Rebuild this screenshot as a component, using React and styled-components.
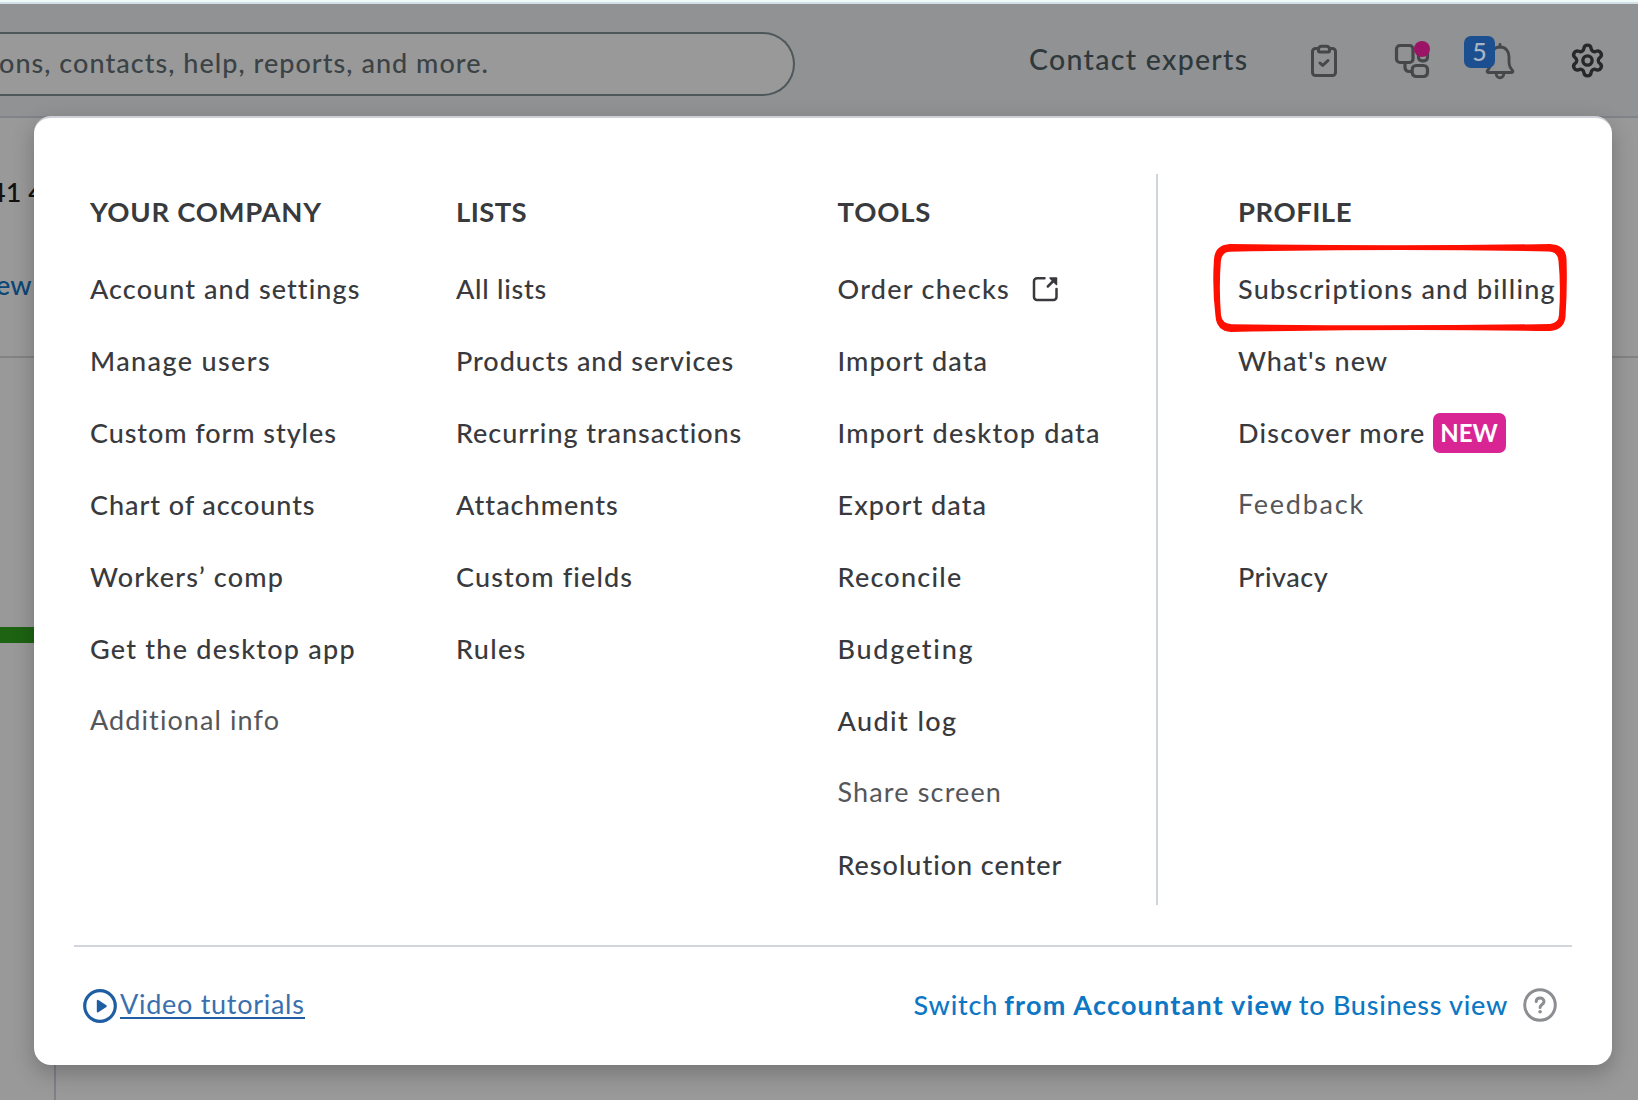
import React from 'react';
import styled, { createGlobalStyle } from 'styled-components';
import { Settings } from 'lucide-react';

const companyItems = [
    { title: 'Account and settings', spacing: 1.08 },
    { title: 'Manage users', spacing: 1.38 },
    { title: 'Custom form styles', spacing: 0.92 },
    { title: 'Chart of accounts', spacing: 0.93 },
    { title: 'Workers’ comp', spacing: 1.2 },
    { title: 'Get the desktop app', spacing: 1.24 },
    { title: 'Additional info', spacing: 1.1, light: true },
];

const listItems = [
    { title: 'All lists', spacing: 0.75 },
    { title: 'Products and services', spacing: 0.95 },
    { title: 'Recurring transactions', spacing: 0.94 },
    { title: 'Attachments', spacing: 1 },
    { title: 'Custom fields', spacing: 1.13 },
    { title: 'Rules', spacing: 1.3 },
];

const toolItems = [
    { title: 'Order checks', spacing: 1.27, external: true },
    { title: 'Import data', spacing: 1.1 },
    { title: 'Import desktop data', spacing: 1.18 },
    { title: 'Export data', spacing: 1.05 },
    { title: 'Reconcile', spacing: 1.25 },
    { title: 'Budgeting', spacing: 1.75 },
    { title: 'Audit log', spacing: 1.4 },
    { title: 'Share screen', spacing: 1.15, light: true },
    { title: 'Resolution center', spacing: 0.97 },
];

const profileItems = [
    { title: 'Subscriptions and billing', spacing: 1.23, marked: true },
    { title: "What's new", spacing: 0.95 },
    { title: 'Discover more', spacing: 1.22, isNew: true },
    { title: 'Feedback', spacing: 1.75, light: true },
    { title: 'Privacy', spacing: 0.5 },
];

function ClipboardIcon() {
    return (
        <svg width="36" height="36" viewBox="0 0 36 36" fill="none" stroke="#45474a" strokeWidth="3" strokeLinecap="round" strokeLinejoin="round">
            <path d="M12 5.500H9.500a3 3 0 0 0-3 3V29.500a3 3 0 0 0 3 3h17a3 3 0 0 0 3-3V8.500a3 3 0 0 0-3-3H24" />
            <path d="M12.500 7.800v-1.500a3 3 0 0 1 3-3h5a3 3 0 0 1 3 3v1.500a1.200 1.200 0 0 1-1.200 1.200h-8.600a1.200 1.200 0 0 1-1.200-1.200z" />
            <path d="M14 20l2.700 2.500 5.300-5" />
        </svg>
    );
}

function AppsIcon() {
    return (
        <svg width="44" height="44" viewBox="0 0 44 44" fill="none" stroke="#45474a" strokeWidth="3.2" strokeLinecap="round">
            <rect x="6.500" y="6.500" width="16.500" height="17" rx="3.500" />
            <rect x="28.500" y="10" width="9" height="11.800" rx="3.500" />
            <rect x="22.200" y="26.500" width="15.300" height="11" rx="4" />
            <path d="M15 24v4.500a4 4 0 0 0 4 4h2.500" />
            <circle cx="32" cy="10" r="8" fill="#9c1465" stroke="none" />
        </svg>
    );
}

function BellIcon() {
    return (
        <svg width="30" height="38" viewBox="0 0 30 38" fill="none" stroke="#45474a" strokeWidth="2.8" strokeLinecap="round" strokeLinejoin="round">
            <path d="M15 2.500v2.500" />
            <path d="M15 5c-5.500 0-9 4-9 9.500v5c0 4.500-1.500 7-3.500 9-.8.900-.4 2 .8 2h23.400c1.200 0 1.600-1.100.800-2-2-2-3.500-4.500-3.500-9v-5c0-5.500-3.500-9.500-9-9.500z" />
            <path d="M11.200 31.500a3.800 4.300 0 0 0 7.600 0" />
        </svg>
    );
}

function ExternalIcon() {
    return (
        <svg width="26" height="26" viewBox="0 0 26 26" fill="none" stroke="#393a3d" strokeWidth="2.5" strokeLinecap="round" strokeLinejoin="round">
            <path d="M12.500 2.300H5a3 3 0 0 0-3 3V21a3 3 0 0 0 3 3h16.500a3 3 0 0 0 3-3v-8" />
            <path d="M15.800 10.500l6-6" />
            <path d="M18 2h6.500v6.500z" fill="#393a3d" strokeWidth="1.500" />
        </svg>
    );
}

function PlayIcon() {
    return (
        <svg width="34" height="34" viewBox="0 0 34 34">
            <circle cx="17" cy="17" r="15.300" fill="none" stroke="#205ea3" strokeWidth="3.200" />
            <path d="M14.800 11.800v10.600l8-5.300z" fill="#205ea3" stroke="#205ea3" strokeWidth="2" strokeLinejoin="round" />
        </svg>
    );
}

function HelpIcon() {
    return (
        <svg width="34" height="34" viewBox="0 0 34 34" fill="none" stroke="#8c8e91" strokeLinecap="round">
            <circle cx="17" cy="17" r="15.300" strokeWidth="3" />
            <path d="M13.200 13.600c.2-4.700 7.800-4.600 7.800 0 0 3-3.900 2.900-3.900 5.800" strokeWidth="3" />
            <circle cx="17.100" cy="23.800" r="1.800" fill="#8c8e91" stroke="none" />
        </svg>
    );
}

function MarkerOutline() {
    return (
        <Marker width="354" height="88" viewBox="0 0 354 88">
            <path
                fill="#ff0f00"
                fillRule="evenodd"
                d="M17 0Q180 2.500 337 0Q353 1 353.500 15Q354.500 42 352.500 73Q351 86 337 87Q180 84.500 18 88Q3.500 87 2.500 72Q-1 44 1 15Q2 1 17 0Z
                   M17 7.800Q8.500 8 7.800 18Q5.800 44 8 71Q9 80 19 80.300Q180 82.500 337 80Q345.500 79 346 71Q348 42 345.500 17Q345 8 336 7.500Q180 4.500 17 7.800Z"
            />
        </Marker>
    );
}

function MenuColumn({ title, spacing, items, divided }) {
    return (
        <Column $divided={divided}>
            <ColumnTitle $spacing={spacing}>{title}</ColumnTitle>
            {items.map(item => (
                <MenuItem key={item.title}>
                    <MenuLink href="#" $light={item.light} $spacing={item.spacing}>{item.title}</MenuLink>
                    {item.external && <ExternalSlot><ExternalIcon /></ExternalSlot>}
                    {item.isNew && <NewBadge>NEW</NewBadge>}
                    {item.marked && <MarkerOutline />}
                </MenuItem>
            ))}
        </Column>
    );
}

function App() {
    return (
        <Page>
            <GlobalStyle />
            <TopStrip />
            <Header>
                <SearchBox>ons, contacts, help, reports, and more.</SearchBox>
                <HeaderActions>
                    <ContactLabel>Contact experts</ContactLabel>
                    <ClipboardIcon />
                    <IconSlot $gap="48px"><AppsIcon /></IconSlot>
                    <Notifications>
                        <BellIcon />
                        <Count>5</Count>
                    </Notifications>
                    <IconSlot $gap="54px"><Settings size={37} color="#26282b" strokeWidth={2.2} /></IconSlot>
                </HeaderActions>
            </Header>
            <Backdrop>
                <CompanyInfo>41 4</CompanyInfo>
                <ReviewLink>ew</ReviewLink>
                <Rule />
                <GreenBar />
                <LowerPane />
            </Backdrop>
            <Menu>
                <Columns>
                    <MenuColumn title="YOUR COMPANY" spacing={0.7} items={companyItems} />
                    <MenuColumn title="LISTS" spacing={0.4} items={listItems} />
                    <MenuColumn title="TOOLS" spacing={0.8} items={toolItems} />
                    <MenuColumn title="PROFILE" spacing={0.5} items={profileItems} divided />
                </Columns>
                <Footer>
                    <Tutorials>
                        <PlayIcon />
                        <TutorialsLink href="#">Video tutorials</TutorialsLink>
                    </Tutorials>
                    <SwitchView>
                        <SwitchText $spacing={0.8}>Switch</SwitchText>
                        <SwitchText $spacing={1.2} $bold>from Accountant view</SwitchText>
                        <SwitchText $spacing={0.72}>to Business view</SwitchText>
                        <HelpIcon />
                    </SwitchView>
                </Footer>
            </Menu>
        </Page>
    );
}

export default App;

const GlobalStyle = createGlobalStyle`
    * {
        box-sizing: border-box;
    }

    body {
        margin: 0;
        overflow: hidden;
        font-family: Lato, "Open Sans", sans-serif;
        font-size: 27px;
        font-weight: 500;
        color: #393a3d;
    }

    svg {
        display: block;
        flex: none;
    }
`;

const Page = styled.div`
    position: relative;
    display: flex;
    flex-direction: column;
    width: 1638px;
    height: 1100px;
    overflow: hidden;
    background: #999;
`;

const TopStrip = styled.div`
    height: 4px;
    flex: none;
    background: #effafb;
    border-bottom: 2px solid #d3e0e5;
`;

const Header = styled.header`
    display: flex;
    flex: none;
    height: 114px;
    background: #909294;
    border-bottom: 2px solid #808389;
`;

const SearchBox = styled.div`
    display: flex;
    align-items: center;
    width: 795px;
    height: 64px;
    margin-top: 28px;
    padding-bottom: 4px;
    border: 2px solid #4e585b;
    border-left: 0;
    border-radius: 0 32px 32px 0;
    background: #999;
    color: #3b4346;
    letter-spacing: 1.03px;
    white-space: nowrap;
    text-indent: -1px;
`;

const HeaderActions = styled.div`
    display: flex;
    align-items: center;
    height: 113px;
    margin-left: 233px;
`;

const ContactLabel = styled.span`
    width: 278px;
    padding: 0 0 4px 1px;
    font-size: 28.5px;
    letter-spacing: 1.3px;
    color: #2f383b;
`;

const IconSlot = styled.span`
    margin-left: ${props => props.$gap};
`;

const Notifications = styled.div`
    position: relative;
    width: 30px;
    margin-left: 51px;
`;

const Count = styled.span`
    position: absolute;
    top: -6px;
    left: -21px;
    width: 31px;
    height: 32px;
    border-radius: 7px;
    background: #1c4f8f;
    color: #a9b5c4;
    font-size: 25px;
    line-height: 31px;
    text-align: center;
`;

const Backdrop = styled.main`
    display: flex;
    flex-direction: column;
    flex: 1;
`;

const CompanyInfo = styled.div`
    height: 92px;
    padding-top: 57px;
    text-indent: -10px;
    color: #111;
    white-space: pre;
`;

const ReviewLink = styled.div`
    height: 146px;
    padding-top: 58px;
    text-indent: -4px;
    color: #0b4677;
`;

const Rule = styled.div`
    height: 2px;
    background: #838383;
`;

const GreenBar = styled.div`
    width: 60px;
    height: 16px;
    margin-top: 269px;
    background: #1d6312;
`;

const LowerPane = styled.div`
    flex: 1;
    margin-left: 54px;
    border-left: 2px solid #7f8086;
`;

const Menu = styled.section`
    position: absolute;
    top: 116px;
    left: 34px;
    display: flex;
    flex-direction: column;
    width: 1578px;
    height: 949px;
    padding: 56px 40px 0;
    border-top: 2px solid #cfd0d8;
    border-radius: 17px;
    background: #fff;
    box-shadow: 0 8px 22px rgba(0, 0, 0, 0.24);
`;

const Columns = styled.div`
    display: grid;
    grid-template-columns: 366px 381.5px 318.5px 1fr;
    height: 731px;
    padding-left: 16px;
`;

const Column = styled.div`
    padding-left: ${props => (props.$divided ? '80px' : '0')};
    border-left: ${props => (props.$divided ? '2px solid #d0d4dc' : '0')};
`;

const ColumnTitle = styled.h2`
    height: 62px;
    margin: 0 0 17px;
    padding-top: 18px;
    font-size: 27.5px;
    font-weight: 700;
    line-height: 40px;
    letter-spacing: ${props => props.$spacing}px;
`;

const MenuItem = styled.div`
    position: relative;
    display: flex;
    align-items: center;
    height: 72px;
`;

const MenuLink = styled.a`
    color: ${props => (props.$light ? '#55565a' : '#393a3d')};
    font-weight: ${props => (props.$light ? 400 : 500)};
    letter-spacing: ${props => props.$spacing}px;
    padding-bottom: ${props => (props.$light ? '4px' : '2px')};
    text-decoration: none;
    white-space: nowrap;
`;

const ExternalSlot = styled.span`
    margin-left: 22px;
`;

const NewBadge = styled.span`
    width: 73px;
    height: 40px;
    margin-left: 7px;
    border-radius: 7px;
    background: #d92494;
    color: #fff;
    font-size: 24px;
    font-weight: 700;
    line-height: 40px;
    text-align: center;
`;

const Marker = styled.svg`
    position: absolute;
    top: -9px;
    left: -25px;
`;

const Footer = styled.footer`
    display: flex;
    justify-content: space-between;
    align-items: center;
    margin-top: 40px;
    height: 119px;
    padding: 0 15px 0 9px;
    border-top: 2px solid #d3d5dc;
`;

const Tutorials = styled.div`
    display: flex;
    align-items: center;
    gap: 3px;
`;

const TutorialsLink = styled.a`
    height: 32px;
    margin-bottom: 6px;
    border-bottom: 2px solid #205ea3;
    color: #3a70ae;
    font-weight: 400;
    line-height: 34px;
    letter-spacing: 0.72px;
    text-decoration: none;
`;

const SwitchView = styled.div`
    display: flex;
    align-items: center;
    gap: 6px;
    padding-bottom: 1px;

    svg {
        margin-left: 9px;
    }
`;

const SwitchText = styled.span`
    color: #0d77c4;
    font-weight: ${props => (props.$bold ? 700 : 500)};
    letter-spacing: ${props => props.$spacing}px;
    padding-bottom: 2px;
`;
